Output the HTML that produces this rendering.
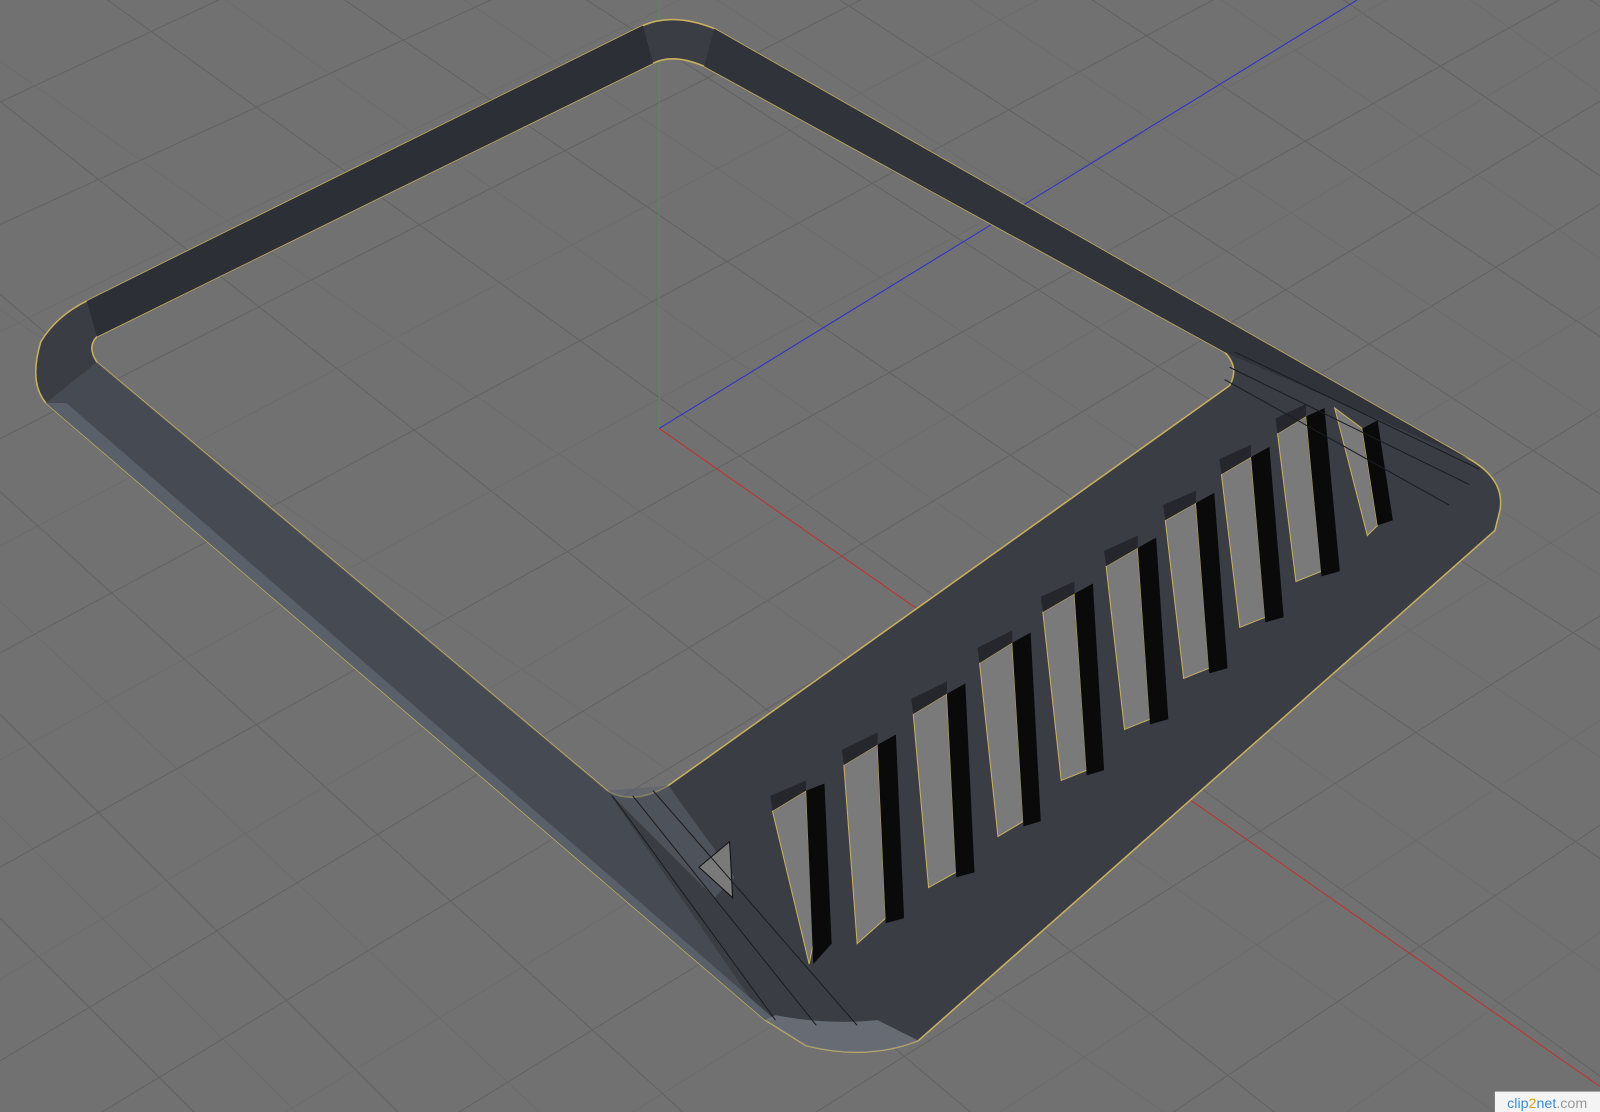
<!DOCTYPE html>
<html><head><style>html,body{margin:0;padding:0;background:#717171;overflow:hidden;width:1600px;height:1112px}svg{display:block}</style></head>
<body>
<svg width="1600" height="1112" viewBox="0 0 1568 1090" preserveAspectRatio="none" xmlns="http://www.w3.org/2000/svg">
<rect width="1568" height="1090" fill="#717171"/>
<g stroke="#626262" stroke-width="1" fill="none">
<path d="M-200 120 L1200 1300 M-100 20 L1450 1250 M50 -40 L1700 1150 M250 -60 L1800 1000 M450 -80 L1900 850 M700 -80 L1900 700 M950 -80 L1900 550 M1200 -80 L1900 400 M1450 -80 L1900 250 M-200 300 L900 1300 M-200 500 L600 1300 M-200 700 L300 1200"/>
<path d="M0 220 L700 -100 M0 430 L1000 -80 M0 640 L1300 -60 M0 850 L1600 -40 M100 1090 L1700 120 M450 1090 L1700 320 M800 1090 L1700 520 M1150 1090 L1700 720 M0 100 L300 -40 M0 1040 L1650 50"/>
</g>
<g stroke="#676767" stroke-width="0.7" fill="none" opacity="0.7">
<path d="M-150 200 L1300 1200 M0 60 L1550 1150 M150 -50 L1750 1080 M350 -70 L1850 930 M580 -80 L1900 780 M830 -80 L1900 630 M1080 -80 L1900 480 M1330 -80 L1900 330 M-200 400 L750 1300 M-200 600 L450 1250"/>
<path d="M0 325 L850 -90 M0 535 L1150 -70 M0 745 L1450 -50 M0 960 L1650 -20 M280 1090 L1700 220 M620 1090 L1700 420 M980 1090 L1700 620 M1320 1090 L1700 820"/>
</g>
<line x1="646" y1="0" x2="646" y2="420" stroke="#3aa03a" stroke-width="1"/>
<line x1="646" y1="420" x2="1330" y2="0" stroke="#3030c8" stroke-width="1"/>
<line x1="646" y1="420" x2="1568" y2="1065" stroke="#c03030" stroke-width="1"/>
<path fill-rule="evenodd" fill="#3a3d44" stroke="#c8b060" stroke-width="1.5" d="M630 25 Q660 12 700 28 L1440 450 Q1475 470 1470 500 L1465 520 L900 1020 Q850 1040 790 1025 L750 1000 L45 395 Q28 375 40 335 Q55 310 85 295 Z
M640 62 Q660 52 690 65 L1200 345 Q1215 360 1205 378 L655 770 Q620 790 595 775 L95 355 Q85 340 95 330 Z"/>
<path fill="#2c2f35" d="M640 62 L630 25 L85 295 L95 330 Z"/>
<path fill="#30333a" d="M690 65 L700 28 L1440 450 L1200 345 Z"/>
<path fill="#4a4f58" d="M45 395 L95 355 L595 775 L750 1000 Z" opacity="0.8"/>
<path fill="#5a606a" d="M45 395 L65 395 L760 1000 L750 1000 Z"/>
<path fill="#7a7f88" d="M750 1000 L790 1025 Q850 1040 900 1020 L860 1000 Q810 1005 760 995 Z" opacity="0.7"/>
<path fill="#5c616b" d="M595 775 L655 770 L720 860 L700 880 Z" opacity="0.6"/>
<g fill="#7a7a7a" stroke="#c8b060" stroke-width="1">
<path d="M757 795 L790 775 L797 925 L793 945 Z"/>
<path d="M827 750 L860 730 L868 900 L840 925 Z"/>
<path d="M895 700 L928 680 L937 855 L910 870 Z"/>
<path d="M960 650 L992 630 L1003 805 L978 820 Z"/>
<path d="M1022 600 L1053 582 L1065 755 L1040 765 Z"/>
<path d="M1084 555 L1115 537 L1127 705 L1102 715 Z"/>
<path d="M1142 510 L1172 493 L1185 655 L1160 665 Z"/>
<path d="M1197 465 L1226 448 L1240 605 L1215 615 Z"/>
<path d="M1252 425 L1280 408 L1295 560 L1270 570 Z"/>
<path d="M1308 400 L1335 420 L1350 515 L1340 525 Z"/>
</g>
<g fill="#0a0a0a">
<path d="M790 775 L808 768 L815 925 L797 945 Z"/>
<path d="M860 730 L878 720 L886 900 L868 905 Z"/>
<path d="M928 680 L946 670 L955 855 L937 860 Z"/>
<path d="M992 630 L1010 620 L1020 805 L1003 810 Z"/>
<path d="M1053 582 L1071 572 L1082 755 L1065 760 Z"/>
<path d="M1115 537 L1133 527 L1145 705 L1127 710 Z"/>
<path d="M1172 493 L1190 483 L1203 655 L1185 660 Z"/>
<path d="M1226 448 L1244 438 L1258 605 L1240 610 Z"/>
<path d="M1280 408 L1298 400 L1313 560 L1295 565 Z"/>
<path d="M1335 420 L1350 412 L1365 510 L1350 515 Z"/>
</g>
<g fill="#25272c">
<path d="M755 780 L790 765 L790 775 L757 795 Z"/>
<path d="M825 735 L860 718 L860 730 L827 750 Z"/>
<path d="M893 685 L928 668 L928 680 L895 700 Z"/>
<path d="M958 635 L992 618 L992 630 L960 650 Z"/>
<path d="M1020 585 L1053 570 L1053 582 L1022 600 Z"/>
<path d="M1082 540 L1115 525 L1115 537 L1084 555 Z"/>
<path d="M1140 495 L1172 481 L1172 493 L1142 510 Z"/>
<path d="M1195 450 L1226 436 L1226 448 L1197 465 Z"/>
<path d="M1250 410 L1280 396 L1280 408 L1252 425 Z"/>
</g>
<path d="M685 850 L715 825 L718 880 Z" fill="#7a7a7a" stroke="#111" stroke-width="1"/>
<g stroke="#1a1c20" stroke-width="1" fill="none">
<path d="M1210 345 L1450 460 M1205 360 L1440 475 M1200 372 L1420 495 M600 780 L760 1000 M620 780 L800 1005 M640 775 L840 1005"/>
</g>
<rect x="1465" y="1070" width="103" height="20" fill="#f4f4f4"/>
<text x="1477" y="1086" font-family="Liberation Sans, sans-serif" font-size="14" fill="#3a8fd0">clip<tspan fill="#e0a020">2</tspan>net<tspan fill="#999">.com</tspan></text>
</svg>
</body></html>
